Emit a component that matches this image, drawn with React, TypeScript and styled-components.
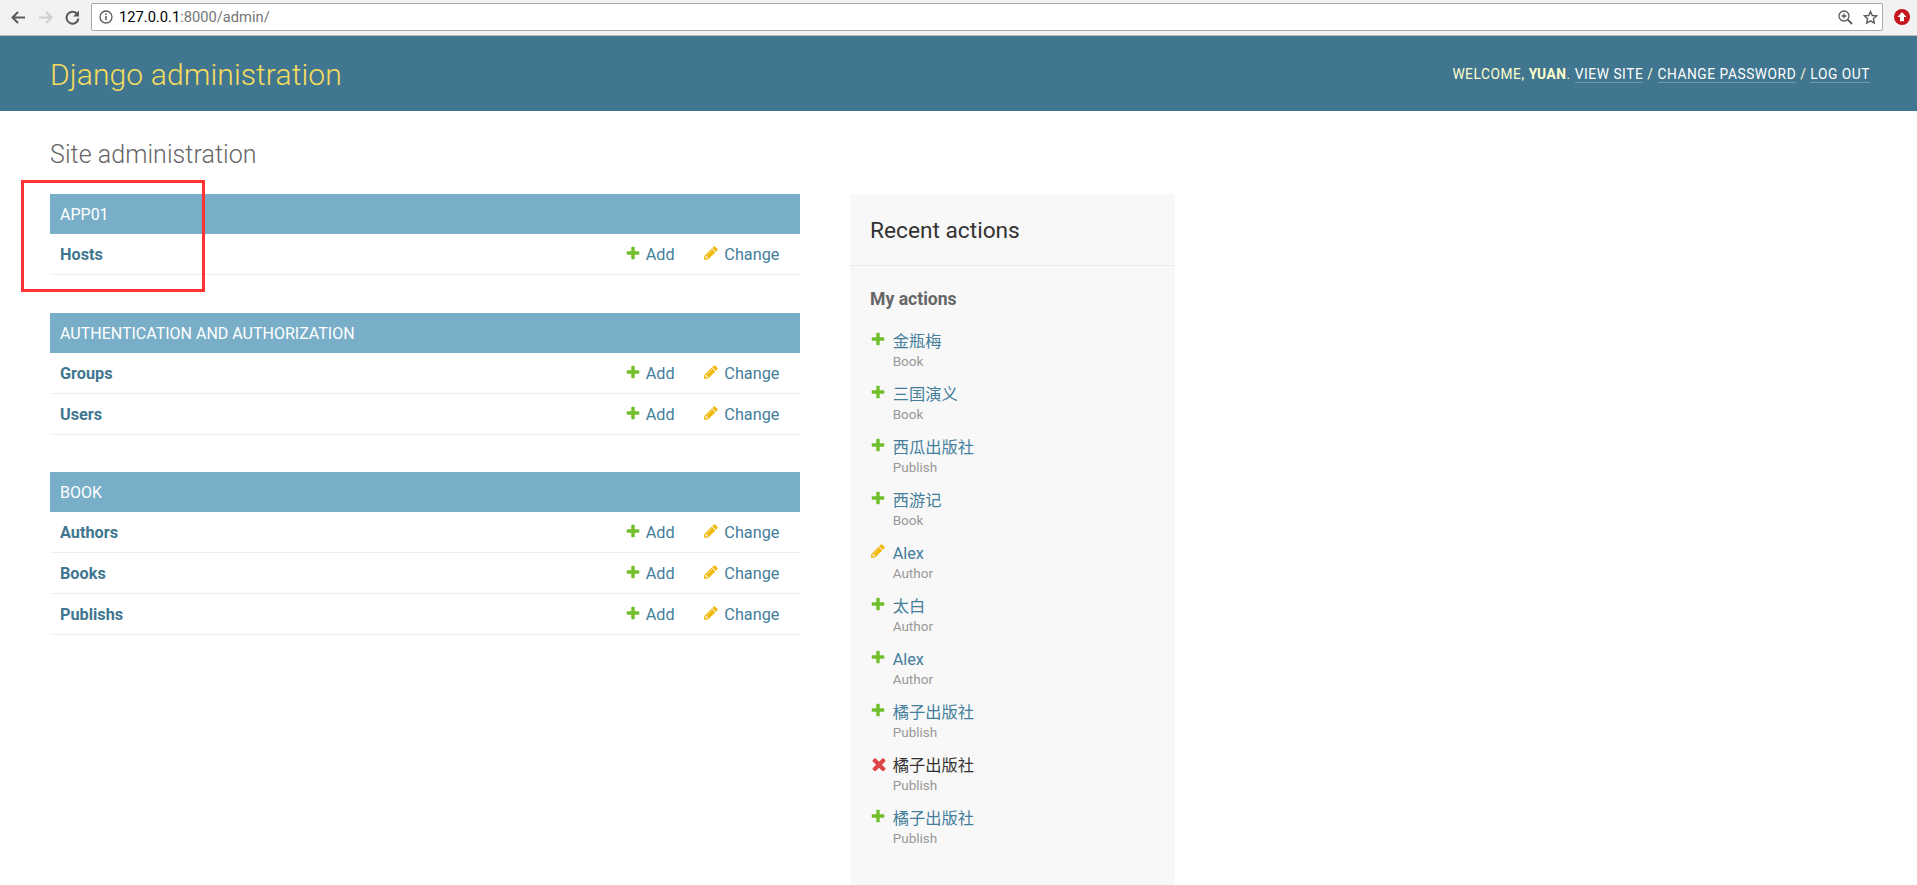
import React from "react";
import styled, { createGlobalStyle } from "styled-components";

const Global = createGlobalStyle`
  html, body { margin: 0; padding: 0; background: #fff; height: 885px; overflow: hidden; }
  body { font-family: Roboto, "Noto Sans CJK SC", "Liberation Sans", sans-serif; font-size: 16.25px; color: #333; }
  * { box-sizing: border-box; }
`;

const Page = styled.div`
  position: relative;
  width: 1917px;
  height: 885px;
  display: flex;
  flex-direction: column;
  overflow: hidden;
`;

const BrowserBar = styled.div`
  height: 36px;
  flex: none;
  background: #f2f2f2;
  border-bottom: 1px solid #b8b8b8;
  display: flex;
  align-items: center;
  padding: 0 0 1px 9px;
`;

const NavButton = styled.span`
  width: 19px;
  height: 19px;
  margin-right: 8px;
  display: block;
  flex: none;
`;

const Omnibox = styled.div`
  width: 1792px;
  height: 28px;
  margin-left: 1px;
  background: #fff;
  border: 1px solid #a9a9a9;
  border-radius: 2px;
  display: flex;
  align-items: center;
  padding: 0 4px 0 7px;
  font-family: Roboto, sans-serif;
  font-size: 14.7px;
`;

const Host = styled.span`
  color: #000;
  margin-left: 6px;
`;

const Path = styled.span`
  color: #757575;
  flex: 1;
`;

const ToolIcon = styled.svg<{ $gap?: number }>`
  display: block;
  flex: none;
  margin-left: ${(p) => p.$gap ?? 0}px;
`;

const ExtensionSlot = styled.div`
  flex: 1;
  display: flex;
  justify-content: center;
  padding-left: 3px;
`;

const Header = styled.header`
  height: 75px;
  flex: none;
  background: #417690;
  color: #ffc;
  display: flex;
  align-items: center;
  justify-content: space-between;
  padding: 1px 47px 0 50px;
`;

const Branding = styled.h1`
  margin: 0;
  font-size: 30px;
  letter-spacing: 0.12px;
  font-weight: 300;
  color: #f5dd5d;
`;

const UserTools = styled.div`
  font-size: 13.75px;
  font-weight: 400;
  letter-spacing: 0.55px;
  text-transform: uppercase;
  color: #ffc;
`;

const UserName = styled.strong`
  font-weight: 700;
`;

const ToolLink = styled.a`
  color: #fff;
  border-bottom: 1px solid rgba(255, 255, 255, 0.25);
  text-decoration: none;
`;

const Content = styled.main`
  flex: 1;
  min-height: 0;
  padding: 28px 50px 0;
  display: flex;
  flex-direction: column;
`;

const Title = styled.h1`
  margin: 0 0 24px;
  font-size: 25px;
  letter-spacing: 0.06px;
  line-height: 31px;
  font-weight: 300;
  color: #666;
`;

const Columns = styled.div`
  flex: 1;
  min-height: 0;
  display: flex;
  align-items: stretch;
`;

const MainColumn = styled.div`
  width: 750px;
  flex: none;
  margin-right: 50px;
`;

const Module = styled.section<{ $gap: number }>`
  margin-bottom: ${(p) => p.$gap}px;
`;

const Caption = styled.div`
  height: 40px;
  background: #79aec8;
  color: #fff;
  padding: 1px 10px 0;
  display: flex;
  align-items: center;
  font-size: 16px;
  text-transform: uppercase;
`;

const Row = styled.div`
  height: 41px;
  border-bottom: 1px solid #eee;
  display: flex;
  align-items: center;
  padding: 0 19.7px 0 10px;
`;

const ModelName = styled.a`
  flex: 1;
  color: #417690;
  font-weight: 700;
  font-size: 16.25px;
`;

const RowAction = styled.a<{ $width: number }>`
  width: ${(p) => p.$width}px;
  display: flex;
  align-items: center;
  color: #447e9b;
  font-size: 16.25px;
`;

const ActionIcon = styled.svg`
  width: 16px;
  height: 16px;
  margin-right: 5px;
  margin-top: -2px;
  flex: none;
  display: block;
`;

const Sidebar = styled.aside`
  width: 325px;
  flex: none;
  background: #f8f8f8;
`;

const SidebarTitle = styled.h2`
  margin: 0;
  height: 72px;
  padding: 2px 20px 0;
  display: flex;
  align-items: center;
  border-bottom: 1px solid #eaeaea;
  font-size: 22.7px;
  font-weight: 400;
  color: #333;
`;

const SidebarBody = styled.div`
  padding: 23px 20px 0;
`;

const SidebarSub = styled.h3`
  margin: 0 0 18px;
  font-size: 17.6px;
  line-height: 21px;
  font-weight: 700;
  color: #666;
`;

const ActionList = styled.ul`
  list-style: none;
  margin: 0;
  padding: 0;
`;

const ActionItem = styled.li`
  height: 53px;
  display: flex;
  align-items: flex-start;
`;

const ActionMarker = styled.svg`
  width: 16px;
  height: 16px;
  margin: 3px 6.7px 0 0;
  flex: none;
  display: block;
`;

const ActionText = styled.div`
  display: flex;
  flex-direction: column;
  padding-top: 3px;
`;

const ActionLink = styled.a<{ $plain?: boolean }>`
  color: ${(p) => (p.$plain ? "#333" : "#447e9b")};
  font-size: 16.25px;
  line-height: 22px;
`;

const ActionType = styled.span`
  color: #999;
  font-size: 13.5px;
  line-height: 17px;
`;

const Highlight = styled.div`
  position: absolute;
  left: 21px;
  top: 180px;
  width: 184px;
  height: 112px;
  border: 3px solid #ff3333;
  pointer-events: none;
`;

type Kind = "add" | "change" | "delete";

const icons: Record<Kind, { fill: string; d: string; box: string }> = {
  add: {
    fill: "#70bf2b",
    box: "0 0 1792 1792",
    d: "M1600 796v192q0 40-28 68t-68 28h-416v416q0 40-28 68t-68 28h-192q-40 0-68-28t-28-68v-416h-416q-40 0-68-28t-28-68v-192q0-40 28-68t68-28h416v-416q0-40 28-68t68-28h192q40 0 68 28t28 68v416h416q40 0 68 28t28 68z",
  },
  change: {
    fill: "#efb80b",
    box: "0 0 1792 1792",
    d: "M491 1536l91-91-235-235-91 91v107h128v128h107zm523-928q0-22-22-22-10 0-17 7l-542 542q-7 7-7 17 0 22 22 22 10 0 17-7l542-542q7-7 7-17zm-54-192l416 416-832 832h-416v-416zm683 96q0 53-37 90l-166 166-416-416 166-165q36-38 90-38 53 0 91 38l235 234q37 39 37 91z",
  },
  delete: {
    fill: "#dd4646",
    box: "70 70 1467 1467",
    d: "M1490 1322q0 40-28 68l-136 136q-28 28-68 28t-68-28l-294-294-294 294q-28 28-68 28t-68-28l-136-136q-28-28-28-68t28-68l294-294-294-294q-28-28-28-68t28-68l136-136q28-28 68-28t68 28l294 294 294-294q28-28 68-28t68 28l136 136q28 28 28 68t-28 68l-294 294 294 294q28 28 28 68z",
  },
};

const modules = [
  { name: "App01", gap: 38, rows: ["Hosts"] },
  { name: "Authentication and Authorization", gap: 37, rows: ["Groups", "Users"] },
  { name: "Book", gap: 0, rows: ["Authors", "Books", "Publishs"] },
];

const actions: { kind: Kind; title: string; type: string }[] = [
  { kind: "add", title: "金瓶梅", type: "Book" },
  { kind: "add", title: "三国演义", type: "Book" },
  { kind: "add", title: "西瓜出版社", type: "Publish" },
  { kind: "add", title: "西游记", type: "Book" },
  { kind: "change", title: "Alex", type: "Author" },
  { kind: "add", title: "太白", type: "Author" },
  { kind: "add", title: "Alex", type: "Author" },
  { kind: "add", title: "橘子出版社", type: "Publish" },
  { kind: "delete", title: "橘子出版社", type: "Publish" },
  { kind: "add", title: "橘子出版社", type: "Publish" },
];

export default function App() {
  return (
    <Page>
      <Global />
      <BrowserBar>
        <NavButton>
          <svg width="19" height="19" viewBox="0 0 19 19" fill="none" stroke="#5a5a5a" strokeWidth="2">
            <path d="M16 9.5H3.5M9 4l-5.5 5.5L9 15" />
          </svg>
        </NavButton>
        <NavButton>
          <svg width="19" height="19" viewBox="0 0 19 19" fill="none" stroke="#cfcfcf" strokeWidth="2">
            <path d="M3 9.5h12.5M10 4l5.5 5.5L10 15" />
          </svg>
        </NavButton>
        <NavButton>
          <svg width="19" height="19" viewBox="0 0 19 19" fill="none" stroke="#5a5a5a" strokeWidth="2">
            <path d="M15.5 10.5a6 6 0 1 1-1.6-5" />
            <path d="M16 2.5v6h-6" fill="#5a5a5a" stroke="none" />
          </svg>
        </NavButton>
        <Omnibox>
          <ToolIcon width="14" height="14" viewBox="0 0 14 14" fill="none" stroke="#5a5a5a" strokeWidth="1.3">
            <circle cx="7" cy="7" r="6" />
            <path d="M7 6v4.2M7 3.6v1.4" strokeWidth="1.5" />
          </ToolIcon>
          <Host>127.0.0.1</Host>
          <Path>:8000/admin/</Path>
          <ToolIcon width="15" height="15" viewBox="0 0 15 15" fill="none" stroke="#5a5a5a" strokeWidth="1.3">
            <circle cx="6" cy="6" r="5" />
            <path d="M9.7 9.7L14 14" strokeWidth="1.8" />
            <path d="M3.5 6h5M6 3.5v5" />
          </ToolIcon>
          <ToolIcon $gap={10} width="15" height="15" viewBox="0 0 15 15" fill="none" stroke="#5a5a5a" strokeWidth="1.4">
            <path d="M7.5 1.5l1.8 4 4.3.4-3.2 2.9.9 4.3-3.8-2.2-3.8 2.2.9-4.3L1.4 5.9l4.3-.4z" />
          </ToolIcon>
        </Omnibox>
        <ExtensionSlot>
          <ToolIcon width="16" height="16" viewBox="0 0 16 16">
            <circle cx="8" cy="8" r="8" fill="#c4161c" />
            <path d="M8 3L3.5 8H6v4.2h4V8h2.5z" fill="#fff" />
          </ToolIcon>
        </ExtensionSlot>
      </BrowserBar>

      <Header>
        <Branding>Django administration</Branding>
        <UserTools>
          Welcome, <UserName>yuan</UserName>. <ToolLink>View site</ToolLink> / <ToolLink>Change password</ToolLink> / <ToolLink>Log out</ToolLink>
        </UserTools>
      </Header>

      <Content>
        <Title>Site administration</Title>
        <Columns>
          <MainColumn>
            {modules.map((m) => (
              <Module key={m.name} $gap={m.gap}>
                <Caption>{m.name}</Caption>
                {m.rows.map((r) => (
                  <Row key={r}>
                    <ModelName>{r}</ModelName>
                    <RowAction $width={78.7}>
                      <ActionIcon viewBox={icons.add.box}>
                        <path fill={icons.add.fill} d={icons.add.d} />
                      </ActionIcon>
                      Add
                    </RowAction>
                    <RowAction $width={77}>
                      <ActionIcon viewBox={icons.change.box}>
                        <path fill={icons.change.fill} d={icons.change.d} />
                      </ActionIcon>
                      Change
                    </RowAction>
                  </Row>
                ))}
              </Module>
            ))}
          </MainColumn>
          <Sidebar>
            <SidebarTitle>Recent actions</SidebarTitle>
            <SidebarBody>
              <SidebarSub>My actions</SidebarSub>
              <ActionList>
                {actions.map((a, i) => (
                  <ActionItem key={i}>
                    <ActionMarker viewBox={icons[a.kind].box}>
                      <path fill={icons[a.kind].fill} d={icons[a.kind].d} />
                    </ActionMarker>
                    <ActionText>
                      <ActionLink $plain={a.kind === "delete"}>{a.title}</ActionLink>
                      <ActionType>{a.type}</ActionType>
                    </ActionText>
                  </ActionItem>
                ))}
              </ActionList>
            </SidebarBody>
          </Sidebar>
        </Columns>
      </Content>
      <Highlight />
    </Page>
  );
}
